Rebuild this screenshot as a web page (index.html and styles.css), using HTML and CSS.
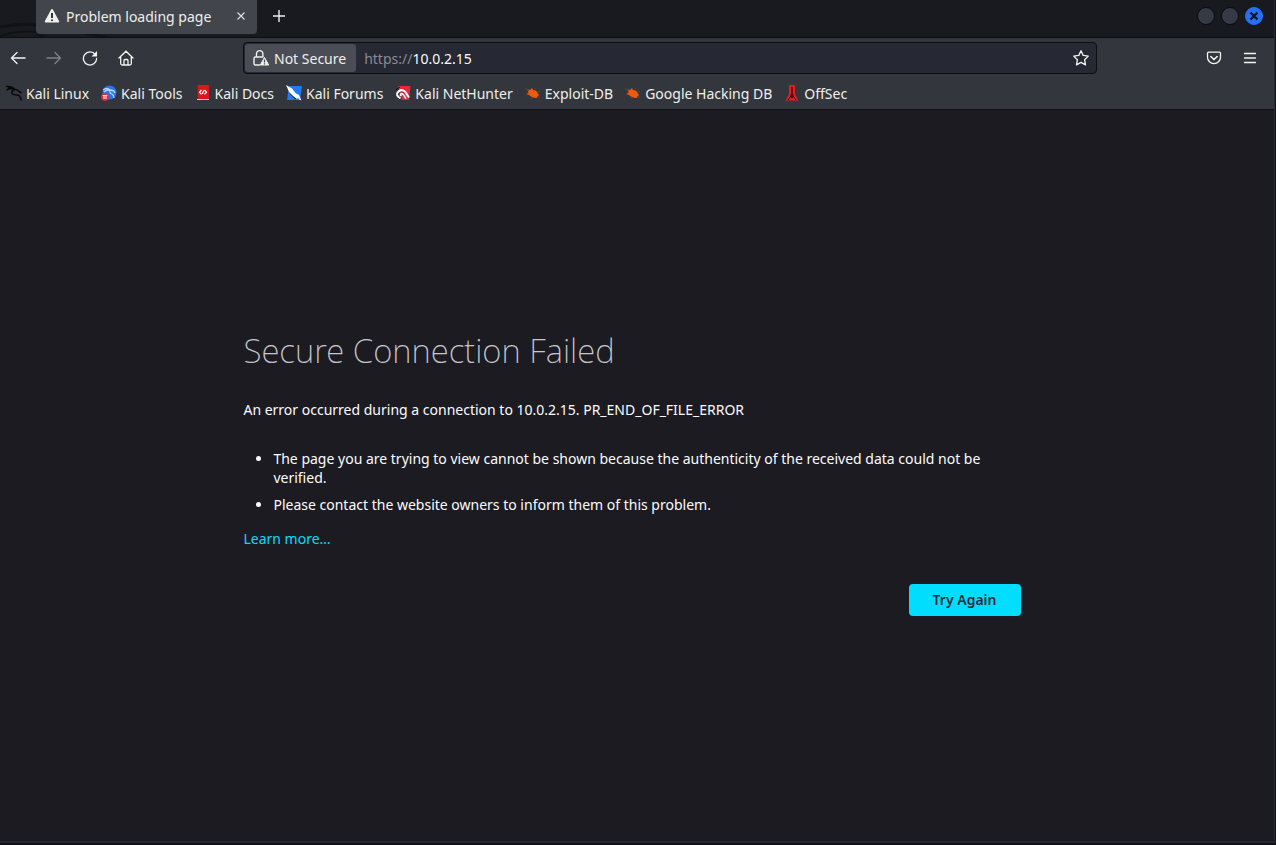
FILE: index.html
```html
<!DOCTYPE html>
<html lang="en">
<head>
<meta charset="utf-8">
<meta name="viewport" content="width=device-width, initial-scale=1">
<title>Problem loading page</title>
<link rel="stylesheet" href="styles.css">
</head>
<body>
<div class="window">
  <header class="chrome">
    <div class="tabstrip">
      <svg class="wallpaper" width="120" height="38" viewBox="0 0 120 38" fill="none" stroke="#111216" aria-hidden="true"><path d="M0 27Q20 23 37 25" stroke-width="3"/><path d="M0 36Q18 30 37 32M37 34L48 38M85 34Q98 35 110 38" stroke-width="2"/></svg>
      <div class="tab">
        <svg width="16" height="16" viewBox="0 0 16 16" aria-hidden="true"><path d="M8 2L14.2 13.5H1.8Z" fill="#f0efeb" stroke="#f0efeb" stroke-width="2" stroke-linejoin="round"/><path d="M8 5v5M8 11.5v1.5" stroke="#34363c" stroke-width="2"/></svg>
        <span class="tab-title">Problem loading page</span>
        <button class="icon-button tab-close" aria-label="Close tab"><svg width="10" height="10" viewBox="0 0 10 10" fill="none" stroke="#deded9" stroke-width="1.2"><path d="M1.5 1.5l7 7M8.5 1.5l-7 7"/></svg></button>
      </div>
      <button class="icon-button new-tab" aria-label="New tab"><svg width="14" height="14" viewBox="0 0 14 14" fill="none" stroke="#f0f0ec" stroke-width="1.4"><path d="M7 1v12M1 7h12"/></svg></button>
      <div class="window-controls">
        <button class="window-button" aria-label="Minimize"></button>
        <button class="window-button" aria-label="Maximize"></button>
        <button class="window-button window-close" aria-label="Close"><svg width="10" height="10" viewBox="0 0 10 10" fill="none" stroke="#10162a" stroke-width="2.4"><path d="M1.5 1.5l7 7M8.5 1.5l-7 7"/></svg></button>
      </div>
    </div>
    <div class="navbar">
      <nav class="nav-buttons" aria-label="Navigation">
        <button class="icon-button" aria-label="Back"><svg width="16" height="16" viewBox="0 0 16 16" class="line"><path d="M15 8H2M7 2.5L1.5 8L7 13.5"/></svg></button>
        <button class="icon-button dim" aria-label="Forward" disabled><svg width="16" height="16" viewBox="0 0 16 16" class="line"><path d="M1 8h13M9 2.5L14.5 8L9 13.5"/></svg></button>
        <button class="icon-button" aria-label="Reload"><svg width="16" height="16" viewBox="0 0 16 16" class="line"><path d="M13.3 4.500A6.600 6.600 0 1 0 14.600 8.500"/><path d="M15 1v5.500H9.500Z" fill="#f4f4f0" stroke="none"/></svg></button>
        <button class="icon-button" aria-label="Home"><svg width="16" height="16" viewBox="0 0 16 16" class="line"><path d="M1 8L8 1.200L15 8M2.700 7V13.500Q2.700 15 4.200 15H11.800Q13.300 15 13.300 13.500V7M6 15V10.500Q6 9.500 7 9.500H9Q10 9.500 10 10.500V15"/></svg></button>
      </nav>
      <div class="urlbar">
        <button class="identity"><svg width="18" height="18" viewBox="0 0 18 18" fill="none" aria-hidden="true"><path d="M4.500 8V4.800a3.200 3.200 0 0 1 6.400 0V8M8 16H3.500Q2 16 2 14.500V9.500Q2 8 3.500 8H11.500" stroke="#f0f0ec" stroke-width="1.400"/><path d="M12.500 8.500L16.700 16H8.300Z" fill="#f0f0ec" stroke="#f0f0ec" stroke-linejoin="round"/><path d="M12.500 10.500v3M12.500 14.300v1.200" stroke="#4b4d56" stroke-width="1.300"/></svg><span>Not Secure</span></button>
        <div class="address" role="textbox" aria-label="Address" contenteditable="true" spellcheck="false"><span class="scheme">https://</span>10.0.2.15</div>
        <button class="icon-button" aria-label="Bookmark this page"><svg width="18" height="18" viewBox="0 0 18 18" class="line"><path stroke-linejoin="round" d="M9 1.700l2.200 4.700 5.100.7-3.700 3.600.9 5.200L9 13.400l-4.500 2.500.9-5.200L1.700 7.100l5.100-.7Z"/></svg></button>
      </div>
      <div class="nav-tools">
        <button class="icon-button" aria-label="Save to Pocket"><svg width="16" height="16" viewBox="0 0 16 16" class="line"><path d="M2.500 2.200h11q1 0 1 1v4a6.500 6.500 0 0 1-13 0v-4q0-1 1-1Z"/><path d="M4.800 6.500L8 9.500l3.200-3" stroke-width="1.600"/></svg></button>
        <button class="icon-button" aria-label="Open menu"><svg width="16" height="16" viewBox="0 0 16 16" class="line"><path d="M2.500 3.500h11M2.500 8h11M2.500 12.500h11"/></svg></button>
      </div>
    </div>
    <nav class="bookmarks" aria-label="Bookmarks">
      <a class="bookmark" href="#"><svg width="16" height="16" viewBox="0 0 16 16" fill="none" stroke="#08090b" stroke-width="1.500"><path d="M0 1.500Q6 1 8.500 4M.5 5Q5 2.500 8.500 4.500Q5 6 6 8.500Q8 10.500 11.500 10Q15 11 15 15.500M8.500 4.500Q12 4 13 6.500L15.500 8M2 3L7 4"/></svg><span>Kali Linux</span></a>
      <a class="bookmark" href="#"><svg width="16" height="16" viewBox="0 0 16 16"><circle cx="8.500" cy="7.500" r="7" fill="#2774ed"/><path d="M2 5Q6 2 9 5Q13 5 14 8M3 7Q6 4 9 5.500Q8 8 11 9Q13 10 13 13" fill="none" stroke="#bad5ff" stroke-width="1.300"/><circle cx="4" cy="12" r="3.800" fill="#ed2936"/><path d="M1.700 10.500h4.600M3 10.500V14M5 10.500V14" stroke="#fff" fill="none"/></svg><span>Kali Tools</span></a>
      <a class="bookmark" href="#"><svg width="16" height="16" viewBox="0 0 16 16"><path d="M2 0h12v15H2Z" fill="#da151b"/><path d="M2 0H3v15H2Z" fill="#253c8b"/><path d="M2 14h12v1H2Z" fill="#e5c6c7"/><path d="M6.500 5L4.500 7.200L6.500 9.400M9.500 5L11.500 7.200L9.500 9.400M7.300 9L8.700 5.500" fill="none" stroke="#fff" stroke-width="1.200"/></svg><span>Kali Docs</span></a>
      <a class="bookmark" href="#"><svg width="16" height="16" viewBox="0 0 16 16"><path d="M3 1h13l-2 14H1Z" fill="#217aef"/><path d="M1 2L5 9L10 14" fill="none" stroke="#18202d" stroke-width="1.500"/><path d="M0 0L6 3.500L9.500 8L13 10L15.500 15.500L13 14.500L12 12.500L11 14L7 11L3 7Z" fill="#fff"/></svg><span>Kali Forums</span></a>
      <a class="bookmark" href="#"><svg width="16" height="16" viewBox="0 0 16 16"><path d="M3 1h12.500L14 15H7Z" fill="#e92835"/><path d="M1 5L5 2M2 12L5 15" stroke="#111" fill="none"/><path d="M5.500 13.500Q0 10 3 7Q6 3.500 10 6.500L14 12.500M6 11Q4.500 8.500 7 8.500Q9 9 11 13.500" stroke="#fff" stroke-width="2" fill="none"/><path d="M4.500 10Q5 6.500 8 7.500L12 13" stroke="#b51c29" stroke-width=".8" fill="none"/></svg><span>Kali NetHunter</span></a>
      <a class="bookmark" href="#"><svg width="16" height="16" viewBox="0 0 16 16"><path d="M2 4L5 5L7 3L8 5Q12 5 13 9L14.500 10L12.500 11L12 13Q7 13 4 10L1 9L3.500 8L3 6Z" fill="#ee5b0c"/><path d="M0 3l4 3M6 12l1 2M10 4l1-1M13 7l2-1M13 11l2 2" stroke="#684030" fill="none"/></svg><span>Exploit-DB</span></a>
      <a class="bookmark" href="#"><svg width="16" height="16" viewBox="0 0 16 16"><path d="M2 4L5 5L7 3L8 5Q12 5 13 9L14.500 10L12.500 11L12 13Q7 13 4 10L1 9L3.500 8L3 6Z" fill="#ee5b0c"/><path d="M0 3l4 3M6 12l1 2M10 4l1-1M13 7l2-1M13 11l2 2" stroke="#684030" fill="none"/></svg><span>Google Hacking DB</span></a>
      <a class="bookmark" href="#"><svg width="16" height="16" viewBox="0 0 16 16"><path d="M5 0h6v9l3.500 6.500H1.500L5 9Z" fill="#e31c24"/><path d="M7.300 2h1.400v7l1 1-1 3H7.300l-1-3 1-1Z" fill="#390b10"/><path d="M4 15L7 11M12 15L9 11" stroke="#390b10"/></svg><span>OffSec</span></a>
    </nav>
  </header>
  <main class="page">
    <section class="error">
      <h1>Secure Connection Failed</h1>
      <p class="reason">An error occurred during a connection to 10.0.2.15. PR_END_OF_FILE_ERROR</p>
      <ul>
        <li>The page you are trying to view cannot be shown because the authenticity of the received data could not be verified.</li>
        <li>Please contact the website owners to inform them of this problem.</li>
      </ul>
      <a class="learn-more" href="#">Learn more…</a>
      <div class="actions"><button class="retry">Try Again</button></div>
    </section>
  </main>
</div>
</body>
</html>
```

FILE: styles.css
```css
* { box-sizing: border-box; }
body {
  margin: 0;
  background: #101218;
  color: #fbfbfe;
  font: 14px/19px "Noto Sans", sans-serif;
}
button { border: 0; padding: 0; background: none; color: inherit; font: inherit; }
svg { display: block; flex: none; }
.line { fill: none; stroke: #f4f4f0; stroke-width: 1.3; stroke-linecap: round; }
.window {
  display: flex;
  flex-direction: column;
  min-height: calc(100vh - 2px);
  margin-right: 1px;
  border-right: 1px solid #292c37;
  border-bottom: 2px solid #242732;
}
.chrome { background: #33363d; color: #efefeb; border-bottom: 1px solid #101114; }
.tabstrip {
  position: relative;
  display: flex;
  align-items: flex-start;
  height: 38px;
  padding-left: 36px;
  background: #191a1f;
  border-bottom: 1px solid #0c0d10;
}
.wallpaper { position: absolute; left: 0; top: 0; }
.tab {
  position: relative;
  display: flex;
  align-items: center;
  gap: 6px;
  width: 221px;
  height: 34px;
  padding: 0 8px 2px;
  background: #42454c;
  border-radius: 0 0 4px 4px;
}
.tab-title { flex: 1; white-space: nowrap; }
.icon-button { display: grid; place-items: center; width: 36px; height: 32px; }
.tab-close { width: 16px; height: 20px; }
.new-tab { margin-left: 4px; }
.window-controls { display: flex; align-items: center; gap: 6px; margin: 7px 11px 0 auto; }
.window-button {
  display: grid;
  place-items: center;
  width: 18px;
  height: 18px;
  border: 1px solid #090a0d;
  border-radius: 50%;
  background: #353a46;
}
.window-close { background: #2670f5; border-color: #2670f5; }
.navbar { display: grid; grid-template-columns: 243px 1fr 177px; padding-top: 4px; }
.nav-buttons { display: flex; }
.dim { opacity: .4; }
.urlbar {
  display: flex;
  align-items: center;
  height: 32px;
  padding-left: 1px;
  border: 1px solid #0d0e12;
  border-radius: 4px;
  background: #262834;
}
.identity {
  display: flex;
  align-items: center;
  gap: 4px;
  height: 28px;
  padding: 0 10px 0 7px;
  border-radius: 3px;
  background: #4b4d56;
  white-space: nowrap;
}
.address { flex: 1; padding-left: 8px; outline: 0; color: #fbfbf8; }
.scheme { color: #8a8b91; }
.urlbar .icon-button { width: 30px; height: 30px; }
.nav-tools { display: flex; justify-content: flex-end; padding-right: 6px; }
.bookmarks { display: flex; gap: 12px; height: 35px; padding: 1px 6px 0; }
.bookmark {
  display: flex;
  align-items: center;
  gap: 4px;
  height: 36px;
  color: inherit;
  text-decoration: none;
  white-space: nowrap;
}
.page {
  flex: 1;
  display: grid;
  align-content: center;
  justify-items: center;
  padding-bottom: 5px;
  background: #1c1b22;
}
.error { width: 61%; min-width: 320px; margin-right: 10px; }
h1 { margin: 0 0 29px; font-size: 33px; line-height: 40px; font-weight: 200; color: #c8c8cc; }
.reason { margin: 0 0 30px; }
ul { margin: 0; padding: 0 0 0 30px; }
li { margin-bottom: 8px; padding-right: 32px; }
li:last-child { margin-bottom: 15px; }
.learn-more { color: #00ddff; text-decoration: none; }
.actions { display: flex; justify-content: flex-end; margin-top: 36px; }
.retry {
  min-width: 112px;
  height: 32px;
  border-radius: 4px;
  background: #00ddff;
  color: #2b2a33;
  font-weight: 600;
}
```
